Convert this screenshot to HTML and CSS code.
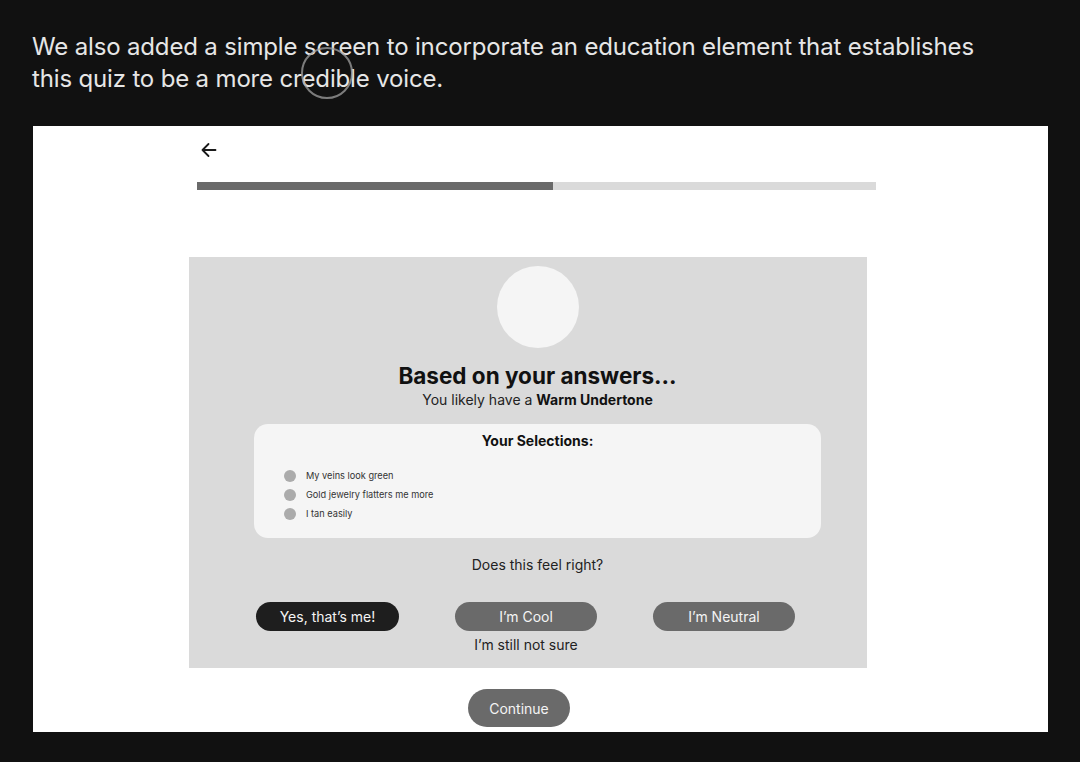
FILE: index.html
```html
<!DOCTYPE html>
<html lang="en">
<head>
<meta charset="utf-8">
<title>Quiz result</title>
<link rel="stylesheet" href="styles.css">
</head>
<body>
<div class="page">
  <p class="intro">We also added a simple screen to incorporate an education element that establishes<br>this quiz to be a more credible voice.</p>
  <div class="cursor"></div>
  <div class="frame">
    <div class="top">
      <svg class="back" width="24" height="24" viewBox="0 0 24 24" fill="none" stroke="#1a1a1a" stroke-width="1.8" stroke-linecap="round" stroke-linejoin="round"><path d="M18.5 12H5.5M11.5 6l-6 6 6 6"/></svg>
      <div class="progress"><div class="fill" style="width:356px"></div></div>
    </div>
    <section class="panel">
      <div class="col">
        <div class="avatar"></div>
        <h1 class="title">Based on your answers...</h1>
        <p class="sub">You likely have a <b>Warm Undertone</b></p>
        <div class="card">
          <h2 class="card-title">Your Selections:</h2>
          <ul class="list">
            <li><span class="dot"></span>My veins look green</li>
            <li><span class="dot"></span>Gold jewelry flatters me more</li>
            <li><span class="dot"></span>I tan easily</li>
          </ul>
        </div>
        <p class="ask">Does this feel right?</p>
        <div class="choices">
          <button class="btn dark">Yes, that’s me!</button>
          <button class="btn">I’m Cool</button>
          <button class="btn">I’m Neutral</button>
          <span class="unsure">I’m still not sure</span>
        </div>
      </div>
    </section>
    <button class="btn continue">Continue</button>
  </div>
</div>
</body>
</html>
```

FILE: styles.css
```css
* { box-sizing: border-box; }
html, body { margin: 0; padding: 0; }
body {
  background: #111111;
  font-family: Inter, "Noto Sans", sans-serif;
  width: 1080px;
  height: 762px;
  overflow: hidden;
}
.page {
  position: relative;
  padding: 31px 0 0 0;
}
.intro {
  margin: 0 0 0 32px;
  color: #e6e6e6;
  font-size: 24px;
  line-height: 32px;
  font-weight: 400;
  letter-spacing: -0.16px;
}
.cursor {
  position: absolute;
  left: 301px;
  top: 47px;
  width: 52px;
  height: 52px;
  border: 2px solid rgba(160,160,160,0.75);
  border-radius: 50%;
}
.frame {
  margin: 31px 0 0 33px;
  width: 1015px;
  height: 606px;
  background: #ffffff;
  display: flex;
  flex-direction: column;
  align-items: flex-start;
}
.top {
  padding: 12px 0 0 164px;
  display: flex;
  flex-direction: column;
}
.back { display: block; margin-left: 0; }
.progress {
  margin-top: 20px;
  width: 679px;
  height: 8px;
  background: #dadada;
}
.fill { height: 100%; background: #6a6a6a; }
.panel {
  margin: 67px 0 0 156px;
  width: 678px;
  height: 411px;
  background: #dadada;
  padding: 9px 0 0 65px;
}
.col {
  width: 567px;
  display: flex;
  flex-direction: column;
  align-items: center;
}
.avatar {
  width: 82px;
  height: 82px;
  border-radius: 50%;
  background: #f5f5f5;
}
.title {
  margin: 15px 0 0 0;
  font-size: 22.5px;
  line-height: 26px;
  font-weight: 700;
  color: #111;
  letter-spacing: 0;
}
.sub {
  margin: 2px 0 0 0;
  font-size: 14px;
  line-height: 18px;
  color: #222;
}
.sub b { font-weight: 700; color: #111; }
.card {
  margin-top: 15px;
  width: 567px;
  height: 114px;
  background: #f5f5f5;
  border-radius: 14px;
  padding: 8px 0 0 30px;
}
.card-title {
  margin: 0 30px 0 0;
  text-align: center;
  font-size: 14px;
  line-height: 18px;
  font-weight: 700;
  color: #111;
}
.list {
  list-style: none;
  margin: 16px 0 0 0;
  padding: 0;
  display: flex;
  flex-direction: column;
}
.list li {
  display: flex;
  align-items: center;
  gap: 10px;
  font-size: 9.2px;
  line-height: 19px;
  color: #333;
}
.dot {
  width: 12px;
  height: 12px;
  border-radius: 50%;
  background: #ababab;
}
.ask {
  margin: 18px 0 0 0;
  font-size: 14px;
  line-height: 18px;
  color: #222;
}
.choices {
  align-self: flex-start;
  margin: 28px 0 0 2px;
  display: grid;
  grid-template-columns: 143px 142px 142px;
  column-gap: 56px;
  row-gap: 5px;
}
.btn {
  border: none;
  border-radius: 15px;
  height: 29px;
  background: #6a6a6a;
  color: #f4f4f4;
  font-family: Inter, "Noto Sans", sans-serif;
  font-size: 14px;
  padding: 0;
}
.btn.dark { background: #1e1e1e; }
.unsure {
  grid-column: 2;
  text-align: center;
  font-size: 14px;
  line-height: 18px;
  color: #222;
}
.continue {
  margin: 21px 0 0 435px;
  width: 102px;
  height: 38px;
  border-radius: 19px;
}
```
